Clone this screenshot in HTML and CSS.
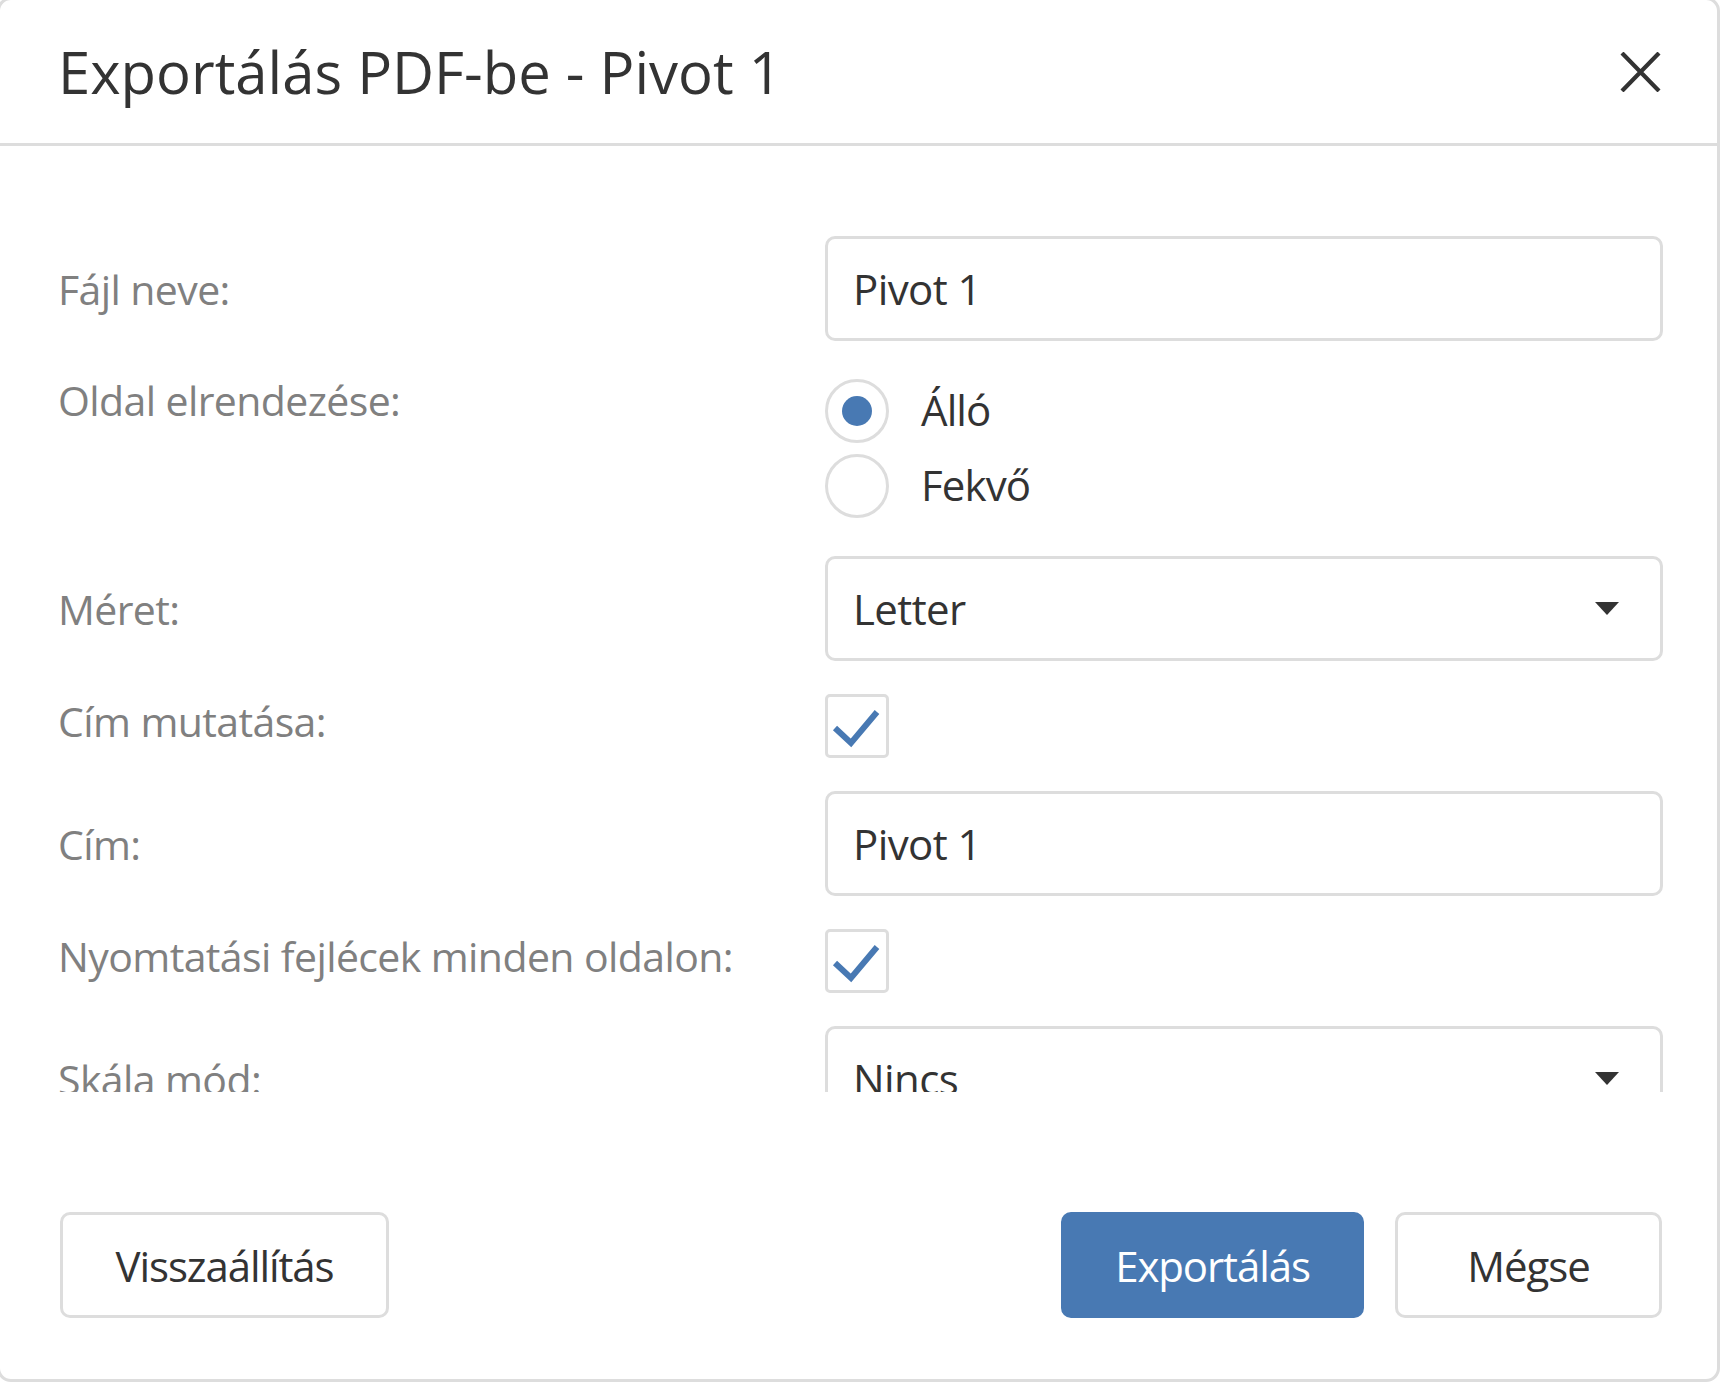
FILE: index.html
```html
<!DOCTYPE html>
<html lang="hu">
<head>
<meta charset="utf-8">
<title>Exportálás PDF-be - Pivot 1</title>
<link rel="stylesheet" href="styles.css">
</head>
<body>
<div class="dialog">
  <header class="dlg-header">
    <h1 class="dlg-title">Exportálás PDF-be - Pivot 1</h1>
    <button class="close" aria-label="Bezárás">
      <svg width="41" height="40" viewBox="0 0 41 40"><path d="M2 1 L39 39 M39 1 L2 39" stroke="#333" stroke-width="4.2" fill="none"/></svg>
    </button>
  </header>
  <div class="dlg-body">
    <div class="form">
      <div class="row">
        <div class="lbl">Fájl neve:</div>
        <div class="ctl"><div class="field">Pivot 1</div></div>
      </div>
      <div class="row">
        <div class="lbl lbl-top">Oldal elrendezése:</div>
        <div class="ctl radios">
          <div class="radio-opt"><span class="radio checked"><span class="dot"></span></span><span class="opt-text">Álló</span></div>
          <div class="radio-opt"><span class="radio"></span><span class="opt-text">Fekvő</span></div>
        </div>
      </div>
      <div class="row">
        <div class="lbl">Méret:</div>
        <div class="ctl"><div class="field select"><span>Letter</span><span class="caret"></span></div></div>
      </div>
      <div class="row">
        <div class="lbl lbl-check">Cím mutatása:</div>
        <div class="ctl checks"><span class="checkbox"><svg width="58" height="58" viewBox="0 0 58 58"><path d="M7 31 L23 46 L49 15" stroke="#4879b3" stroke-width="6" fill="none"/></svg></span></div>
      </div>
      <div class="row">
        <div class="lbl">Cím:</div>
        <div class="ctl"><div class="field">Pivot 1</div></div>
      </div>
      <div class="row">
        <div class="lbl lbl-check">Nyomtatási fejlécek minden oldalon:</div>
        <div class="ctl checks"><span class="checkbox"><svg width="58" height="58" viewBox="0 0 58 58"><path d="M7 31 L23 46 L49 15" stroke="#4879b3" stroke-width="6" fill="none"/></svg></span></div>
      </div>
      <div class="row">
        <div class="lbl">Skála mód:</div>
        <div class="ctl"><div class="field select"><span>Nincs</span><span class="caret"></span></div></div>
      </div>
    </div>
  </div>
  <footer class="dlg-footer">
    <button class="btn btn-reset">Visszaállítás</button>
    <div class="btn-group">
      <button class="btn btn-primary btn-export">Exportálás</button>
      <button class="btn btn-cancel">Mégse</button>
    </div>
  </footer>
</div>
</body>
</html>
```

FILE: styles.css
```css
html, body {
  margin: 0;
  padding: 0;
  overflow: hidden;
  background: #fff;
}

.dialog {
  box-sizing: border-box;
  width: 1723px;
  height: 1385px;
  margin: -3px 0 0 -3px;
  border: 3px solid #dddddd;
  border-radius: 14px;
  display: flex;
  flex-direction: column;
  font-family: "Open Sans", "Noto Sans", sans-serif;
  color: #333;
  background: #fff;
  overflow: hidden;
}

.dlg-header {
  flex: none;
  height: 143px;
  border-bottom: 3px solid #dddddd;
  display: flex;
  align-items: center;
  justify-content: space-between;
  padding: 0 56px 0 58px;
}

.dlg-title {
  margin: 0;
  font-size: 58px;
  font-weight: 400;
  line-height: 1;
  color: #333;
  letter-spacing: 0;
}

.close {
  border: 0;
  background: none;
  padding: 0;
  margin: 0;
  width: 41px;
  height: 40px;
  display: block;
}
.close svg { display: block; }

.dlg-body {
  flex: none;
  height: 946px;
  overflow: hidden;
  box-sizing: border-box;
  padding: 90px 54px 0 58px;
}

.form {
  display: flex;
  flex-direction: column;
  gap: 31px;
}

.row {
  display: grid;
  grid-template-columns: 767px 1fr;
}

.lbl {
  font-size: 41px;
  color: #808080;
  display: flex;
  align-items: center;
  letter-spacing: -0.6px;
}
.lbl-top {
  align-items: flex-start;
}
.lbl-check {
  padding-bottom: 10px;
}

.field {
  box-sizing: border-box;
  height: 105px;
  border: 3px solid #dddddd;
  border-radius: 10px;
  padding: 0 41px 0 25px;
  display: flex;
  align-items: center;
  font-size: 42px;
  color: #333;
  letter-spacing: -0.6px;
}

.select {
  justify-content: space-between;
}

.caret {
  width: 0;
  height: 0;
  border-left: 12px solid transparent;
  border-right: 12px solid transparent;
  border-top: 13px solid #333;
}

.radios {
  padding: 7px 0;
  display: flex;
  flex-direction: column;
  gap: 11px;
}

.radio-opt {
  display: flex;
  align-items: center;
  gap: 32px;
  height: 64px;
}

.radio {
  box-sizing: border-box;
  width: 64px;
  height: 64px;
  border: 3px solid #dddddd;
  border-radius: 50%;
  display: flex;
  align-items: center;
  justify-content: center;
}

.dot {
  width: 30px;
  height: 30px;
  border-radius: 50%;
  background: #4879b3;
}

.opt-text {
  font-size: 42px;
  color: #333;
  letter-spacing: -0.9px;
  padding-bottom: 4px;
}

.checks {
  padding: 2px 0;
}

.checkbox {
  box-sizing: border-box;
  width: 64px;
  height: 64px;
  border: 3px solid #dddddd;
  border-radius: 5px;
  display: block;
}
.checkbox svg { display: block; }

.dlg-footer {
  flex: 1;
  display: flex;
  justify-content: space-between;
  align-items: flex-start;
  padding: 120px 55px 0 60px;
}

.btn-group {
  display: flex;
  gap: 31px;
}

.btn {
  box-sizing: border-box;
  height: 106px;
  border: 3px solid #dddddd;
  border-radius: 10px;
  background: #fff;
  color: #333;
  font-family: "Open Sans", "Noto Sans", sans-serif;
  font-size: 42px;
  padding: 0;
  display: flex;
  align-items: center;
  justify-content: center;
  letter-spacing: -1.1px;
}

.btn-primary {
  background: #4879b3;
  border-color: #4879b3;
  color: #fff;
}

.btn-reset { width: 329px; }
.btn-export { width: 303px; }
.btn-cancel { width: 267px; }
```
